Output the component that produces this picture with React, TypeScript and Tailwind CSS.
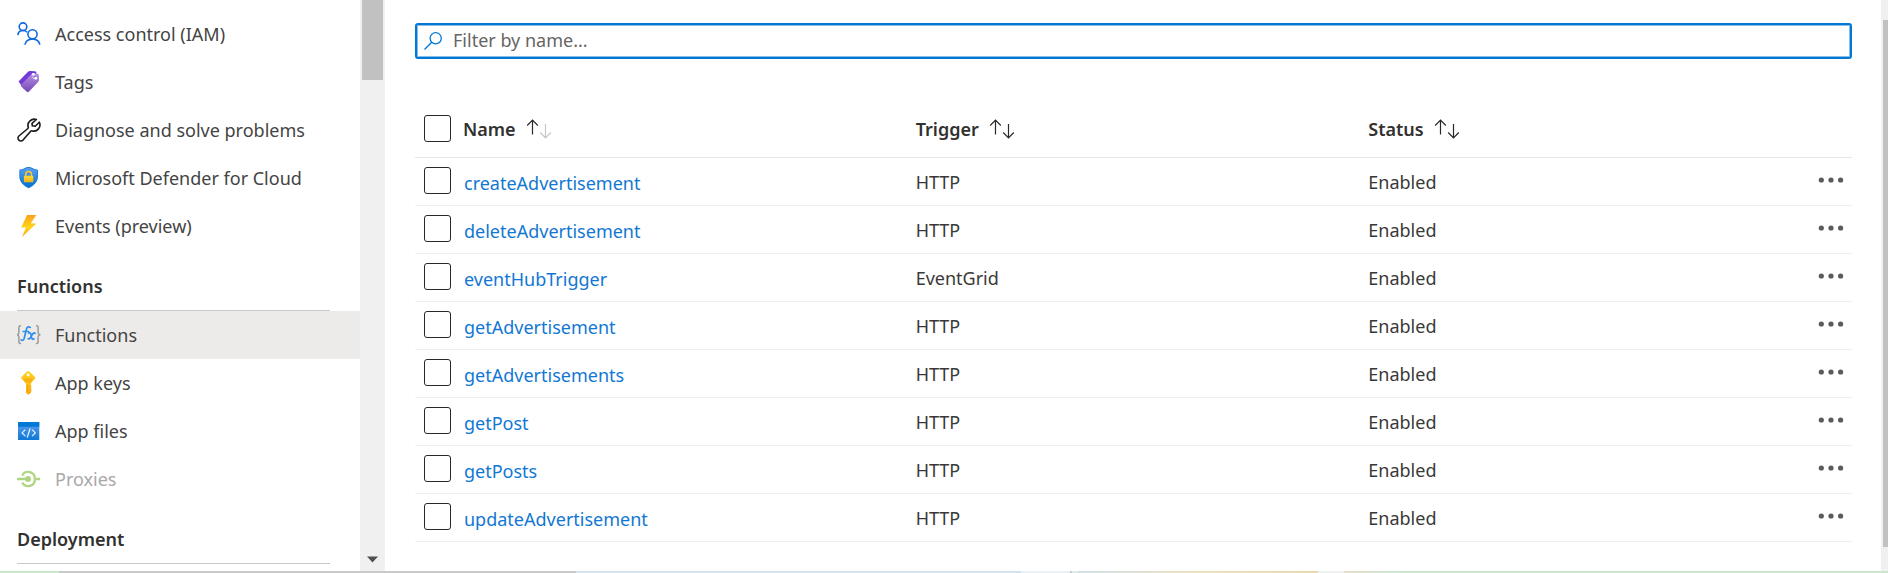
import { useState, type ReactNode } from 'react';

type MenuItem = { label: string; icon: ReactNode; active?: boolean; disabled?: boolean };
type Fn = { name: string; trigger: string; status: string };

const svg = 'h-6 w-6 shrink-0';

const PeopleIcon = () => (
  <svg viewBox="0 0 24 24" className={svg} fill="none" stroke="#0f68e0" strokeWidth="1.6">
    <circle cx="6" cy="4.7" r="3.8" />
    <path d="M.8 13.2c.3-2.900 2.500-4.700 5.300-4.700 1.700 0 3 .6 4 1.700" />
    <circle cx="15.500" cy="12.300" r="4.600" />
    <path d="M8 22.800c.2-3.400 3.300-5.900 7.400-5.900s7.200 2.500 7.400 5.900" />
  </svg>
);

const TagsIcon = () => (
  <svg viewBox="0 0 24 24" className={svg}>
    <defs>
      <linearGradient id="tag" x1="0" y1="0" x2="0" y2="1">
        <stop offset="0" stopColor="#b993e6" />
        <stop offset="1" stopColor="#7646b4" />
      </linearGradient>
    </defs>
    <path d="M1.500 11.500 11 1.800q.8-.8 2-.8l5 .2q1.200.2 1.300 1.400L19 8l-12 11z" fill="#7238d8" />
    <path d="M4 15 14.800 3.800q.7-.7 1.600-.7l4.400.6q1 .2 1 1.200l.2 5.200q0 1.200-.8 2l-9.400 9.600q-1 .9-2 0L4 16.200q-.6-.6 0-1.200z" fill="url(#tag)" />
    <circle cx="16.300" cy="4.300" r="1.400" fill="#fff" />
    <circle cx="18.800" cy="8.300" r="1.400" fill="#fff" />
    <path d="M15 7q1.500 2.500 3.500 1" stroke="#fff" strokeWidth=".7" fill="none" />
  </svg>
);

const WrenchIcon = () => (
  <svg viewBox="0 0 24 24" className={svg} fill="none" stroke="#1b1b1b" strokeWidth="1.600" strokeLinejoin="round">
    <path d="M19.400 1.500a6.300 6.300 0 0 0-8.200 7.600c.2.600 0 1-.3 1.400l-9 7.500a2.900 2.900 0 1 0 4.100 4.100l7.700-8.900c.4-.4.800-.5 1.400-.3a6.200 6.200 0 0 0 7.200-8.700l-4.100 4.100-2.900-.5-.3-2.400z" />
  </svg>
);

const ShieldIcon = () => (
  <svg viewBox="0 0 24 24" className={svg}>
    <defs>
      <linearGradient id="shield" x1="0" y1="0" x2="0" y2="1">
        <stop offset="0" stopColor="#5ea0ef" />
        <stop offset="1" stopColor="#0070cc" />
      </linearGradient>
      <linearGradient id="lock" x1="0" y1="0" x2="0" y2="1">
        <stop offset="0" stopColor="#ffdc2e" />
        <stop offset="1" stopColor="#f5ad18" />
      </linearGradient>
    </defs>
    <path d="M21 10.500c0 6.200-5.700 9.900-8.700 11.600q-.7.300-1.300 0C8 20.400 2.300 16.700 2.300 10.500V4.300q0-.7.700-.8C7.800 3.100 7.800 1 11.600 1s3.900 2.100 8.700 2.500q.7.100.7.800z" fill="#1f7fdc" />
    <path d="M20.100 10.500c0 5.800-5.500 9.100-8.500 10.800-3-1.700-8.500-5-8.500-10.800V4.300C7.900 4 8.200 1.900 11.600 1.900s3.700 2.100 8.500 2.400z" fill="url(#shield)" />
    <path d="M8.700 10V8.300a2.900 2.900 0 0 1 5.800 0V10" fill="none" stroke="#ffc925" strokeWidth="1.500" />
    <rect x="6.900" y="9.800" width="9.400" height="6.500" rx=".7" fill="url(#lock)" />
  </svg>
);

const BoltIcon = () => (
  <svg viewBox="0 0 24 24" className={svg}>
    <defs>
      <linearGradient id="bolt" x1="0" y1="0" x2="0" y2="1">
        <stop offset="0" stopColor="#fba01c" />
        <stop offset=".55" stopColor="#ffd51a" />
        <stop offset="1" stopColor="#fba01c" />
      </linearGradient>
    </defs>
    <path d="M10 1h9.200l-5.400 8.600h5.500L5 23l4-9.400H4.200z" fill="url(#bolt)" />
  </svg>
);

const FxIcon = () => (
  <svg viewBox="0 0 24 24" className={svg}>
    <path d="M4.100 2.800H3.400q-1.500 0-1.500 1.500v5Q1.900 11.100.4 11.800q1.500.7 1.500 2.500v4.600q0 1.500 1.500 1.500h.7M18.900 2.800h.7q1.500 0 1.500 1.500v5q0 1.800 1.500 2.500-1.500.7-1.500 2.500v4.600q0 1.500-1.500 1.500h-.7" fill="none" stroke="#9b9b9b" strokeWidth="1.500" />
    <path d="M13.300 4.400q-3-1.700-3.900 2L7.200 15.200q-.8 2.900-3 1.800M6.200 8.500h5.400M11.600 10.100q1.600-1 2.200 1l1 4q.6 2 2.200.7M18.100 10.300q-1.400-.9-2.700 1l-2 3.400q-1 1.700-2.300.9" fill="none" stroke="#2f8fee" strokeWidth="1.700" strokeLinecap="round" />
  </svg>
);

const KeyIcon = () => (
  <svg viewBox="0 0 24 24" className={svg}>
    <defs>
      <linearGradient id="key" x1="0" y1="0" x2="0" y2="1">
        <stop offset="0" stopColor="#ffd21c" />
        <stop offset="1" stopColor="#fbab14" />
      </linearGradient>
    </defs>
    <path d="M17.900 6.100q.7.800 0 1.700l-4.100 4.600v1.500l.9.900-.9 1 .9 1-.9 1 .9 1-.9 3.200-1.600 1.300q-.9.500-1.500 0l-1.700-1.500V12.400L4.500 7.800q-.7-.9 0-1.700L9.400 1.100q1.800-1.500 3.600 0z" fill="url(#key)" />
    <circle cx="11.200" cy="3.800" r="1.500" fill="#fff" />
    <path d="M7.100 8.200h8.200M7.500 10h7.400M10.600 14v7" stroke="#f59d0d" strokeWidth=".9" />
  </svg>
);

const FilesIcon = () => (
  <svg viewBox="0 0 24 24" className={svg}>
    <defs>
      <linearGradient id="code" x1="0" y1="0" x2="0" y2="1">
        <stop offset="0" stopColor="#5ea0ef" />
        <stop offset="1" stopColor="#0d78d6" />
      </linearGradient>
    </defs>
    <rect x="1" y="3" width="21.300" height="18" rx=".6" fill="url(#code)" />
    <path d="M1 7.800V3.600q0-.6.600-.6h20.100q.6 0 .6.600v4.200z" fill="#0078d4" />
    <path d="m8.300 10.600-3.200 3.300 3.200 3.300M15.100 10.600l3.200 3.300-3.200 3.300M13.100 9.500l-2.900 9" fill="none" stroke="#e8f3ff" strokeWidth="1.200" />
  </svg>
);

const ProxiesIcon = () => (
  <svg viewBox="0 0 24 24" className={svg} fill="none" stroke="#aed581">
    <path d="M0 12H11M18.500 12H23" strokeWidth="2.400" />
    <circle cx="11" cy="12" r="3" fill="#aed581" stroke="none" />
    <path d="M5.200 8.400A6.700 6.700 0 0 1 17.800 12 6.700 6.700 0 0 1 5.200 15.600" strokeWidth="2.200" />
  </svg>
);

const general: MenuItem[] = [
  { label: 'Access control (IAM)', icon: <PeopleIcon /> },
  { label: 'Tags', icon: <TagsIcon /> },
  { label: 'Diagnose and solve problems', icon: <WrenchIcon /> },
  { label: 'Microsoft Defender for Cloud', icon: <ShieldIcon /> },
  { label: 'Events (preview)', icon: <BoltIcon /> },
];

const functionMenu: MenuItem[] = [
  { label: 'Functions', icon: <FxIcon />, active: true },
  { label: 'App keys', icon: <KeyIcon /> },
  { label: 'App files', icon: <FilesIcon /> },
  { label: 'Proxies', icon: <ProxiesIcon />, disabled: true },
];

const functions: Fn[] = [
  { name: 'createAdvertisement', trigger: 'HTTP', status: 'Enabled' },
  { name: 'deleteAdvertisement', trigger: 'HTTP', status: 'Enabled' },
  { name: 'eventHubTrigger', trigger: 'EventGrid', status: 'Enabled' },
  { name: 'getAdvertisement', trigger: 'HTTP', status: 'Enabled' },
  { name: 'getAdvertisements', trigger: 'HTTP', status: 'Enabled' },
  { name: 'getPost', trigger: 'HTTP', status: 'Enabled' },
  { name: 'getPosts', trigger: 'HTTP', status: 'Enabled' },
  { name: 'updateAdvertisement', trigger: 'HTTP', status: 'Enabled' },
];

function Menu({ items }: { items: MenuItem[] }) {
  return (
    <ul>
      {items.map((item) => (
        <li key={item.label}>
          <a
            href="#"
            aria-current={item.active ? 'page' : undefined}
            aria-disabled={item.disabled}
            className={`flex h-12 items-center gap-3.5 pl-[17px] ${item.active ? 'bg-[#ecebe9]' : ''} ${item.disabled ? 'text-[#a8a8a8]' : 'text-[#444444]'}`}
          >
            {item.icon}
            {item.label}
          </a>
        </li>
      ))}
    </ul>
  );
}

function MenuHeading({ children }: { children: ReactNode }) {
  return (
    <h2 className="mr-[30px] ml-[17px] flex h-[61px] items-center border-b border-[#c8c8c8] pt-3 font-semibold text-[#323130]">
      {children}
    </h2>
  );
}

function SortHeader({ label, sorted = false }: { label: string; sorted?: boolean }) {
  return (
    <th scope="col" className="p-0 text-left font-semibold text-[#323130]">
      <button type="button" className="flex items-center gap-2.5">
        {label}
        <svg viewBox="0 0 26 20" className="h-5 w-[26px]" fill="none" stroke="#292827" strokeWidth="1.200">
          <path d="M6.500 15.500V1.400M1.200 6.500l5.300-5.300 5.300 5.300" />
          <path d="M19.500 5v13.600M14.200 13.500l5.300 5.300 5.300-5.300" stroke={sorted ? '#c8c6c4' : '#292827'} />
        </svg>
      </button>
    </th>
  );
}

function Checkbox({ label, checked, onChange }: { label: string; checked: boolean; onChange: () => void }) {
  return (
    <input
      type="checkbox"
      aria-label={label}
      checked={checked}
      onChange={onChange}
      className="block h-[27px] w-[27px] appearance-none rounded-[3px] border border-[#292827] bg-white checked:bg-[#0078d4]"
    />
  );
}

export default function App() {
  const [query, setQuery] = useState('');
  const [selected, setSelected] = useState<string[]>([]);
  const rows = functions.filter((f) => f.name.toLowerCase().includes(query.toLowerCase()));
  const allSelected = selected.length === functions.length;
  const toggle = (name: string) =>
    setSelected((s) => (s.includes(name) ? s.filter((n) => n !== name) : [...s, name]));

  return (
    <div className="flex min-h-screen flex-col bg-white font-['Noto_Sans','Open_Sans',sans-serif] text-[18px] leading-6">
      <div className="flex flex-1">
        <nav aria-label="Resource menu" className="w-[360px] shrink-0 pt-2.5">
          <Menu items={general} />
          <MenuHeading>Functions</MenuHeading>
          <Menu items={functionMenu} />
          <MenuHeading>Deployment</MenuHeading>
        </nav>
        <div aria-hidden="true" className="flex w-[25px] shrink-0 flex-col items-center justify-between bg-[#f0f0f0] pb-2">
          <div className="h-20 w-[21px] bg-[#c1c1c1]" />
          <svg viewBox="0 0 11 7" className="h-[7px] w-[11px]">
            <path d="M0 .5h11L5.500 6.500z" fill="#505050" />
          </svg>
        </div>

        <main className="min-w-0 flex-1 pt-[23px] pr-[29px] pl-[30px]">
          <label className="flex h-9 items-center gap-[11px] rounded-[3px] border-2 border-[#0078d4] pl-[7px] inset-ring inset-ring-[#86bdea]">
            <svg viewBox="0 0 18 18" className="h-[18px] w-[18px] shrink-0" fill="none" stroke="#0078d4" strokeWidth="1.300">
              <circle cx="11.700" cy="6.300" r="5.600" />
              <path d="M7.700 10.300.5 17.500" />
            </svg>
            <input
              type="text"
              aria-label="Filter by name"
              placeholder="Filter by name..."
              value={query}
              onChange={(e) => setQuery(e.target.value)}
              className="h-7 min-w-0 flex-1 bg-transparent pb-0.5 text-[#323130] outline-none placeholder:text-[#666564]"
            />
          </label>

          <table className="mt-[42px] w-full table-fixed border-collapse">
            <colgroup>
              <col className="w-12" />
              <col className="w-[31.5%]" />
              <col className="w-[31.5%]" />
              <col />
              <col className="w-[60px]" />
            </colgroup>
            <thead>
              <tr className="h-14 border-b border-[#e6e6e6]">
                <th className="p-0 pl-[9px]">
                  <Checkbox
                    label="Select all functions"
                    checked={allSelected}
                    onChange={() => setSelected(allSelected ? [] : functions.map((f) => f.name))}
                  />
                </th>
                <SortHeader label="Name" sorted />
                <SortHeader label="Trigger" />
                <SortHeader label="Status" />
                <td className="p-0" />
              </tr>
            </thead>
            <tbody>
              {rows.map((f) => (
                <tr key={f.name} className="h-12 border-b border-[#efefef] text-[#3a3938]">
                  <td className="p-0 pb-0.5 pl-[9px]">
                    <Checkbox label={`Select ${f.name}`} checked={selected.includes(f.name)} onChange={() => toggle(f.name)} />
                  </td>
                  <td className="p-0 pt-1 pl-px">
                    <a href="#" className="text-[#1177d3]">{f.name}</a>
                  </td>
                  <td className="p-0 pt-px">{f.trigger}</td>
                  <td className="p-0 pt-px">{f.status}</td>
                  <td className="p-0 pr-2">
                    <button type="button" aria-label={`More actions for ${f.name}`} className="ml-auto block pb-0.5">
                      <svg viewBox="0 0 26 6" className="h-1.5 w-[26px]" fill="#5a5a5a">
                        <circle cx="3.300" cy="3" r="2.600" />
                        <circle cx="13" cy="3" r="2.600" />
                        <circle cx="22.600" cy="3" r="2.600" />
                      </svg>
                    </button>
                  </td>
                </tr>
              ))}
            </tbody>
          </table>
        </main>

        <div aria-hidden="true" className="flex w-[7px] shrink-0 flex-col bg-[#f0f0f0] pt-5 pb-6 pl-0.5">
          <div className="flex-1 bg-[#c1c1c1]" />
        </div>
      </div>

      <div aria-hidden="true" className="flex h-0.5 shrink-0">
        <div className="w-[3.1%] bg-[#cbe8cd]" />
        <div className="w-[27.4%] bg-[#c9c9c9]" />
        <div className="w-[23.6%] bg-[#d6e2ec]" />
        <div className="w-[2.6%] bg-[#eaf2f8]" />
        <div className="w-0.5 bg-[#c4ccd0]" />
        <div className="w-[0.3%] bg-[#e2ecec]" />
        <div className="w-[12.7%] bg-linear-to-r from-[#d3e0e8] via-[#ece2c0] to-[#ead9b0]" />
        <div className="w-[1.4%] bg-[#f0f0f0]" />
        <div className="w-[3%] bg-linear-to-r from-[#e6dfc8] to-[#cbe6d8]" />
        <div className="flex-1 bg-[#cbe6cd]" />
      </div>
    </div>
  );
}
